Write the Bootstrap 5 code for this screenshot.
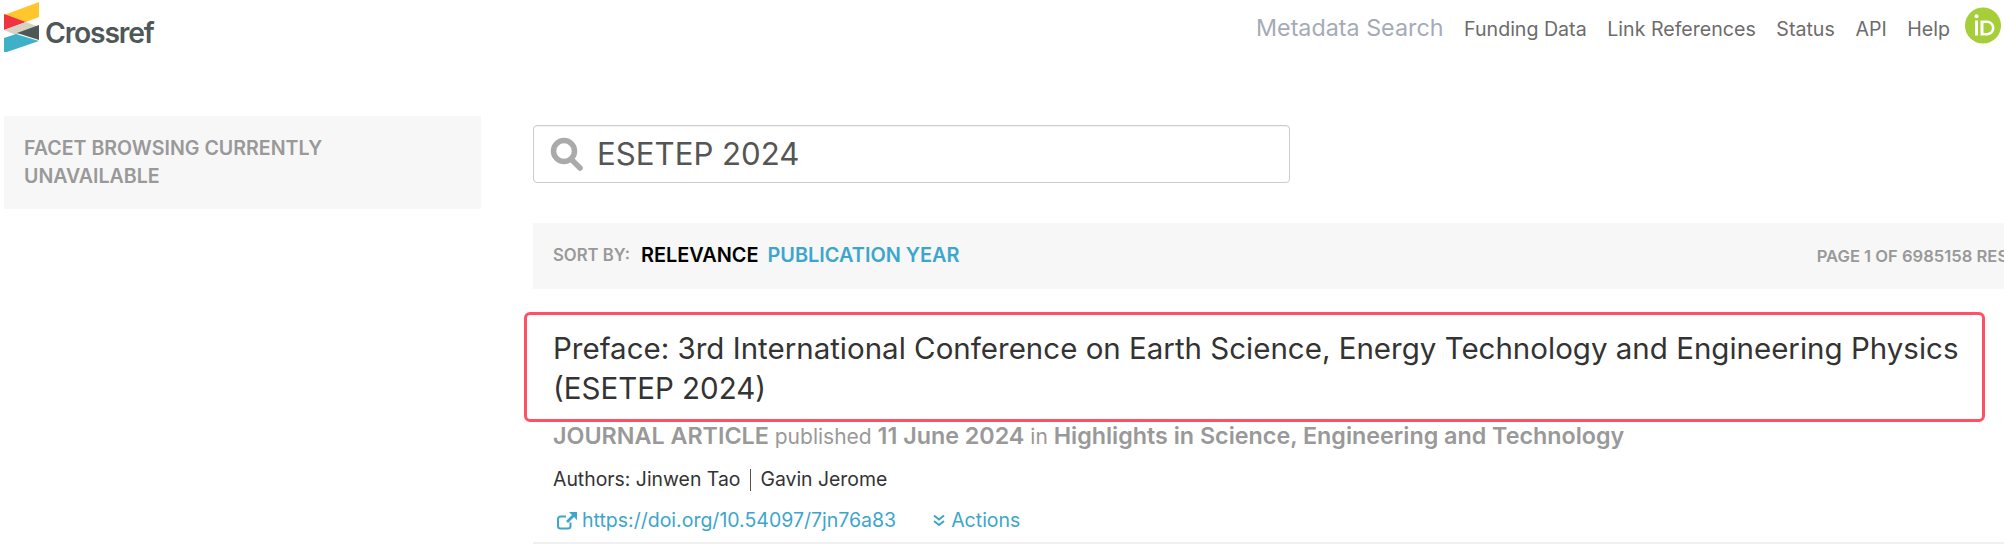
<!doctype html>
<html lang="en"><head><meta charset="utf-8"><title>Crossref Metadata Search</title>
<link href="https://cdn.jsdelivr.net/npm/bootstrap@5.3.0/dist/css/bootstrap.min.css" rel="stylesheet">
<script src="https://cdn.jsdelivr.net/npm/bootstrap@5.3.0/dist/js/bootstrap.bundle.min.js"></script>
<style>
html,body{height:551px;overflow:hidden}
body{font-family:Inter,"Liberation Sans",sans-serif;background:#fff;color:#333}
.top-bar{height:116px;padding-left:4px}
.brand-word{font-size:28.300px;font-weight:600;color:#4f5858;letter-spacing:-1.2px;margin-left:6px;margin-top:19px;line-height:1}
.top-links{padding-top:14px;gap:20.600px;padding-right:3px}
.top-links a{font-size:19.600px;color:#6c6c6c;text-decoration:none;line-height:30px}
.top-links a.meta-link{font-size:23.300px;color:#a5abb6;line-height:28px}
.orcid-disc{width:36px;height:37px;flex:none;margin-left:-5.600px;margin-top:-7px}
.side-col{width:477px;margin-left:4px;flex:none}
.facet-box{background:#f7f7f7;height:93px;padding:18px 60px 18px 20px;font-size:19.600px;line-height:28px;font-weight:600;color:#999;text-transform:uppercase}
.main-col{margin-left:52px;width:1471px;flex:none}
.query-box{width:757px;height:58px;border:1px solid #ccc;border-radius:4px;padding-left:16px;margin-top:9px;box-shadow:inset 0 1px 1px rgba(0,0,0,.05)}
.query-box span{font-size:31.200px;color:#555;margin-left:14px;line-height:1;padding-top:2px}
.sort-bar{height:66px;background:#f7f7f7;margin-top:40px;padding:0 0 0 20px;white-space:nowrap;overflow:hidden}
.sort-lbl{font-size:16.700px;font-weight:600;color:#999}
.sort-act{font-size:19.900px;font-weight:600;color:#000;margin-left:11px}
.sort-alt{font-size:19.900px;font-weight:600;color:#3ca6cc;margin-left:9px}
.page-lbl{font-size:16.600px;font-weight:600;color:#999;margin-left:auto;margin-right:-46px}
.item-wrap{position:relative;padding:0 20px;margin-top:23px}
.red-frame{position:absolute;left:-9px;top:0;right:19px;height:110px;border:3px solid #ff5066;border-radius:6px}
.item-title{font-size:29.500px;line-height:40px;padding-top:16px;margin:0;color:#333;font-weight:400;height:108px}
.item-type{font-size:21px;line-height:32px;color:#999}
.item-type b{font-weight:600;font-size:23.300px}
.item-auth{font-size:19.400px;color:#333;margin-top:13px;line-height:27px}
.auth-sep{display:inline-block;width:1px;height:22px;background:#5a5045;margin:0 9.500px;vertical-align:-5px}
.item-foot{font-size:19.500px;color:#3ca6cc;margin-top:14px;padding-bottom:8px;line-height:27px;gap:37px;margin-left:-20px;padding-left:24px;margin-right:-20px;border-bottom:2px solid #f0f0f0}
.foot-doi{gap:5px}
.foot-act{gap:6px}
</style></head><body>
<div class="top-bar d-flex justify-content-between align-items-start">
 <div class="d-flex align-items-start">
  <svg width="35" height="52" viewBox="0 0 35 52" role="img" aria-label="Crossref logo" class="mt-0">
   <polygon points="0,15 35,2 35,17 22,22" fill="#ffc72c"/>
   <polygon points="0,14 22,22 0,30" fill="#ef3340"/>
   <polygon points="0,30 22,22 35,27 12,35" fill="#d8d2c4"/>
   <polygon points="13,33 35,25 35,40" fill="#4f5858"/>
   <polygon points="0,53 0,38 12,34 35,41" fill="#3eb1c8"/>
  </svg>
  <div class="brand-word">Crossref</div>
 </div>
 <nav class="top-links d-flex align-items-start">
  <a class="meta-link" href="#">Metadata Search</a>
  <a href="#">Funding Data</a><a href="#">Link References</a><a href="#">Status</a><a href="#">API</a><a href="#">Help</a>
  <svg class="orcid-disc" viewBox="0 0 36 36" role="img" aria-label="ORCID"><circle cx="18" cy="18" r="18" fill="#a6ce39"/><rect x="10" y="13" width="3" height="15" fill="#fff"/><circle cx="11.500" cy="8.800" r="2" fill="#fff"/><path d="M15.500 13h6.500a7.500 7.500 0 0 1 0 15h-6.500zm3 2.600v9.800h3.500a4.900 4.900 0 0 0 0-9.800z" fill="#fff"/></svg>
 </nav>
</div>
<div class="d-flex">
 <aside class="side-col"><div class="facet-box">Facet browsing currently unavailable</div></aside>
 <main class="main-col">
  <div class="query-box d-flex align-items-center">
   <svg width="33" height="34" viewBox="0 0 33 34" role="img" aria-label="search"><circle cx="14" cy="14" r="10.500" fill="none" stroke="#aaa" stroke-width="5.500"/><path d="M22 23l8 8" stroke="#aaa" stroke-width="5.500" stroke-linecap="round"/></svg>
   <span>ESETEP 2024</span>
  </div>
  <div class="sort-bar d-flex align-items-center">
   <span class="sort-lbl">SORT BY:</span><span class="sort-act">RELEVANCE</span><span class="sort-alt">PUBLICATION YEAR</span>
   <span class="page-lbl">PAGE 1 OF 6985158 RESULTS</span>
  </div>
  <div class="item-wrap">
   <div class="red-frame"></div>
   <h2 class="item-title">Preface: 3rd International Conference on Earth Science, Energy Technology and Engineering Physics (ESETEP 2024)</h2>
   <div class="item-type"><b>JOURNAL ARTICLE</b> published <b>11 June 2024</b> in <b>Highlights in Science, Engineering and Technology</b></div>
   <div class="item-auth">Authors: Jinwen Tao<span class="auth-sep"></span>Gavin Jerome</div>
   <div class="item-foot d-flex">
    <span class="foot-doi d-flex align-items-center"><svg width="20" height="18" viewBox="0 0 20 18" aria-hidden="true"><path d="M13.500 10.500V14a2.500 2.500 0 0 1-2.500 2.500H3.500A2.500 2.500 0 0 1 1 14V7a2.500 2.500 0 0 1 2.500-2.500H9" fill="none" stroke="#3ca6cc" stroke-width="2"/><path d="M12 0h8v8l-3-3-6 6-2-2 6-6z" fill="#3ca6cc"/></svg>https://doi.org/10.54097/7jn76a83</span>
    <span class="foot-act d-flex align-items-center"><svg width="12" height="13" viewBox="0 0 12 13" aria-hidden="true"><path d="M1 1.500l5 4 5-4M1 7l5 4 5-4" fill="none" stroke="#3ca6cc" stroke-width="2"/></svg>Actions</span>
   </div>
  </div>
 </main>
</div>
</body></html>
